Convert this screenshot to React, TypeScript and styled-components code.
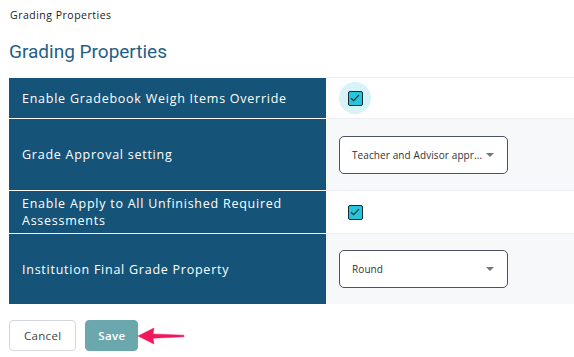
import styled, { createGlobalStyle } from "styled-components";

const GlobalStyle = createGlobalStyle`
    body {
        margin: 0;
        background: #fff;
        font-family: "Open Sans", "Liberation Sans", sans-serif;
    }
`;

const Page = styled.div`
    padding: 0 0 0 9px;
    width: 565px;
`;

const Breadcrumb = styled.div`
    padding: 7px 0 0 1px;
    height: 16px;
    font-size: 10.5px;
    font-weight: 500;
    letter-spacing: 0.5px;
    color: #222;
    line-height: 16px;
`;

const Heading = styled.h2`
    margin: 0;
    padding-top: 17px;
    height: 37px;
    font-family: Roboto, "Liberation Sans", sans-serif;
    font-size: 19px;
    font-weight: 400;
    line-height: 24px;
    color: #1f5f86;
`;

const Table = styled.div`
    display: flex;
    flex-direction: column;
    border-top: 1px solid #eceef1;
`;

const Row = styled.div<{ $height: number; $shaded?: boolean }>`
    display: grid;
    grid-template-columns: 317px 1fr;
    height: ${(p) => p.$height}px;
    background: ${(p) => (p.$shaded ? "#f7f8fa" : "#fff")};
    & + & {
        border-top: 1px solid #eceef1;
    }
`;

const Label = styled.div`
    display: flex;
    align-items: center;
    padding: 0 13px;
    background: #155478;
    color: #fff;
    font-size: 12.5px;
    font-weight: 500;
    letter-spacing: 0.75px;
    line-height: 17px;
    box-shadow: 0 -1px 0 #fff;
`;

const Value = styled.div`
    display: flex;
    align-items: center;
    padding-left: 13px;
`;

const Ripple = styled.div<{ $active?: boolean }>`
    width: 32px;
    height: 32px;
    border-radius: 50%;
    display: flex;
    align-items: center;
    justify-content: center;
    background: ${(p) => (p.$active ? "#d7f3f7" : "transparent")};
`;

const Box = styled.div`
    width: 15px;
    height: 15px;
    box-sizing: border-box;
    border: 1.5px solid #1b2a35;
    border-radius: 2px;
    background: #27c5db;
    display: flex;
    align-items: center;
    justify-content: center;
`;

const Select = styled.div`
    width: 169px;
    height: 38px;
    box-sizing: border-box;
    border: 1px solid #4a5160;
    border-radius: 5px;
    background: #fff;
    display: flex;
    align-items: center;
    padding: 0 13px 0 12px;
    font-size: 10px;
    letter-spacing: 0.1px;
    color: #333;
`;

const SelectText = styled.span`
    white-space: nowrap;
`;

const Caret = styled.span`
    width: 0;
    height: 0;
    margin-left: auto;
    border-left: 4.5px solid transparent;
    border-right: 4.5px solid transparent;
    border-top: 4.5px solid #777;
`;

const Actions = styled.div`
    display: flex;
    align-items: center;
    gap: 9px;
    margin-top: 16px;
`;

const Button = styled.button<{ $primary?: boolean }>`
    height: 31px;
    box-sizing: border-box;
    border-radius: 4px;
    font-family: inherit;
    font-size: 11.5px;
    font-weight: ${(p) => (p.$primary ? 600 : 400)};
    letter-spacing: 0.3px;
    padding: 0 ${(p) => (p.$primary ? 12 : 14)}px;
    border: 1px solid ${(p) => (p.$primary ? "#6aa8ae" : "#d3d6dc")};
    background: ${(p) => (p.$primary ? "#6aa8ae" : "#fff")};
    color: ${(p) => (p.$primary ? "#fff" : "#444")};
`;

function Check({ active }: { active?: boolean }) {
    return (
        <Ripple $active={active}>
            <Box>
                <svg width="10" height="8" viewBox="0 0 10 8">
                    <path d="M1 4.2 L3.6 6.6 L9 1.2" fill="none" stroke="#1b2a35" strokeWidth="1.2" />
                </svg>
            </Box>
        </Ripple>
    );
}

function PointerArrow() {
    return (
        <svg width="48" height="20" viewBox="0 0 48 20" style={{ marginLeft: -9 }}>
            <path
                d="M0 10 L16 2 L15 8 L46 9.2 L46 10.8 L15 12.2 L16 18 Z"
                fill="#f0185c"
                stroke="#f0185c"
                strokeWidth="0.5"
                strokeLinejoin="round"
            />
        </svg>
    );
}

export default function App() {
    return (
        <Page>
            <GlobalStyle />
            <Breadcrumb>Grading Properties</Breadcrumb>
            <Heading>Grading Properties</Heading>
            <Table>
                <Row $height={40}>
                    <Label>Enable Gradebook Weigh Items Override</Label>
                    <Value>
                        <Check active />
                    </Value>
                </Row>
                <Row $height={71} $shaded>
                    <Label>Grade Approval setting</Label>
                    <Value>
                        <Select>
                            <SelectText>Teacher and Advisor appr...</SelectText>
                            <Caret />
                        </Select>
                    </Value>
                </Row>
                <Row $height={42}>
                    <Label>Enable Apply to All Unfinished Required Assessments</Label>
                    <Value>
                        <Check />
                    </Value>
                </Row>
                <Row $height={70} $shaded>
                    <Label>Institution Final Grade Property</Label>
                    <Value>
                        <Select>
                            <SelectText>Round</SelectText>
                            <Caret />
                        </Select>
                    </Value>
                </Row>
            </Table>
            <Actions>
                <Button>Cancel</Button>
                <Button $primary>Save</Button>
                <PointerArrow />
            </Actions>
        </Page>
    );
}
